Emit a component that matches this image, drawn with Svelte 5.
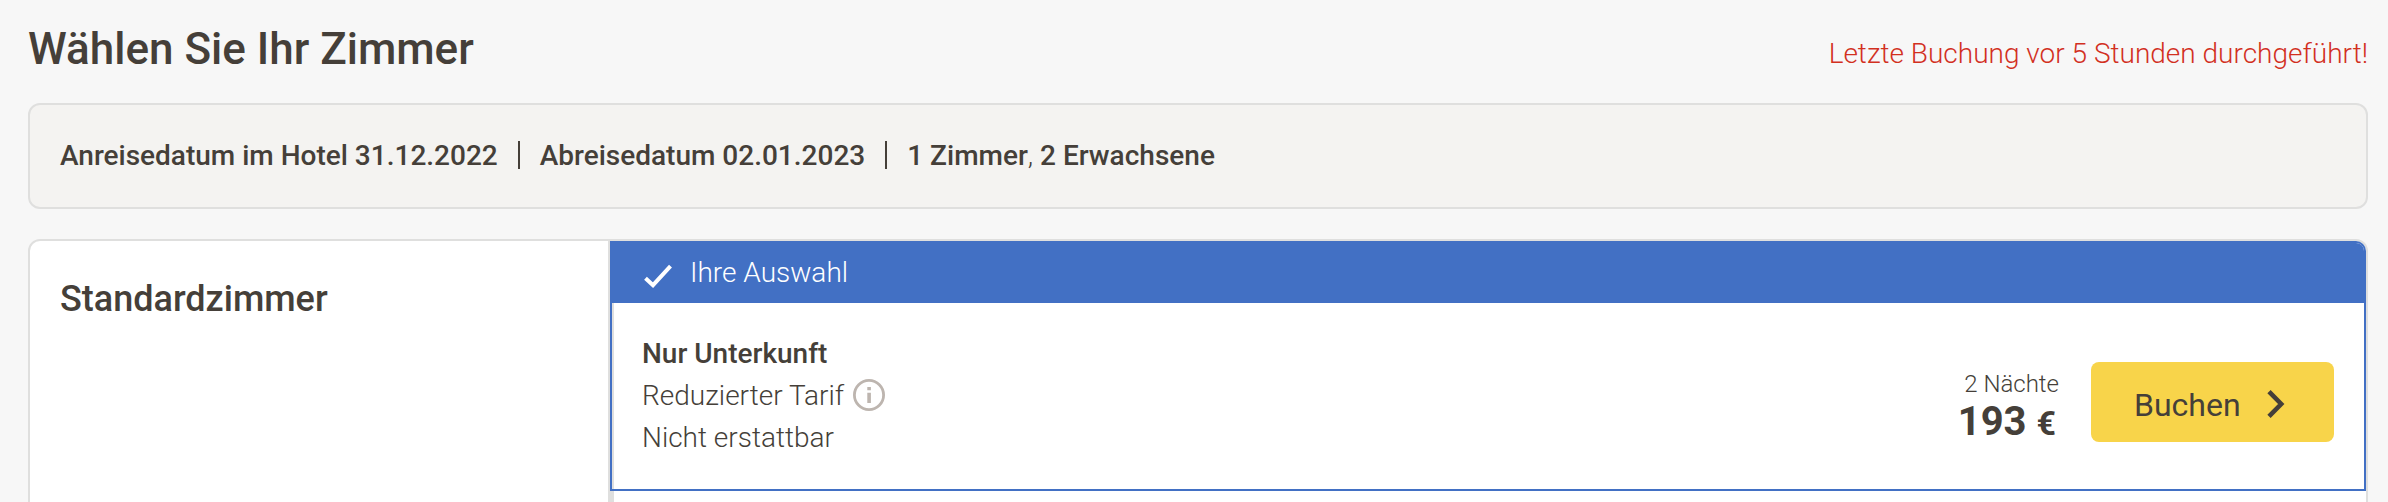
<script lang="ts">
  type Offer = {
    board: string;
    rate: string;
    terms: string;
    nights: number;
    price: number;
  };

  let {
    arrival = "31.12.2022",
    departure = "02.01.2023",
    rooms = 1,
    adults = 2,
    lastBooking = 5,
  } = $props();

  const roomName = "Standardzimmer";

  const offers: Offer[] = [
    {
      board: "Nur Unterkunft",
      rate: "Reduzierter Tarif",
      terms: "Nicht erstattbar",
      nights: 2,
      price: 193,
    },
  ];

  let selected = $state(0);
</script>

<main class="page">
  <header class="head">
    <h1>Wählen Sie Ihr Zimmer</h1>
    <p class="notice">Letzte Buchung vor {lastBooking} Stunden durchgeführt!</p>
  </header>

  <div class="summary">
    <strong class="arrival">Anreisedatum im Hotel {arrival}</strong>
    <span class="sep"></span>
    <strong class="departure">Abreisedatum {departure}</strong>
    <span class="sep"></span>
    <span class="guests"><strong>{rooms} Zimmer</strong>, <strong>{adults} Erwachsene</strong></span>
  </div>

  <section class="card">
    <div class="room">
      <h2>{roomName}</h2>
    </div>

    <div class="offers">
      {#each offers as offer, i (offer.board)}
        <article class="offer" class:selected={selected === i}>
          {#if selected === i}
            <div class="choice">
              <svg width="28" height="24" viewBox="0 0 28 24" fill="none">
                <path d="M1.5 14.2 9 21.2 26.5 2.2" stroke="#fff" stroke-width="4" />
              </svg>
              <span>Ihre Auswahl</span>
            </div>
          {/if}
          <div class="body">
            <div class="details">
              <div class="line board">{offer.board}</div>
              <div class="line">
                <span class="rate">{offer.rate}</span>
                <svg width="32" height="32" viewBox="0 0 32 32">
                  <circle cx="16" cy="16" r="14.6" fill="none" stroke="#bdb5af" stroke-width="2.8" />
                  <path d="M14.3 8h3.6v3.2h-3.6zM14.3 13.8h3.6V24h-3.6z" fill="#bdb5af" />
                </svg>
              </div>
              <div class="line">{offer.terms}</div>
            </div>
            <div class="price">
              <div class="nights">{offer.nights} Nächte</div>
              <div class="amount">{offer.price} <span class="currency">€</span></div>
            </div>
            <button class="book" onclick={() => (selected = i)}>
              <span>Buchen</span>
              <svg width="18" height="30" viewBox="0 0 18 30" fill="none">
                <path d="M2 2.6 14.2 15 2 27.4" stroke="#453f39" stroke-width="4.6" />
              </svg>
            </button>
          </div>
        </article>
      {/each}
    </div>
  </section>
</main>

<style>
  :global(body) {
    background: #f7f7f7;
    overflow: hidden;
  }

  .page {
    box-sizing: border-box;
    width: 2388px;
    height: 502px;
    padding: 0 20px 0 28px;
    overflow: hidden;
    font-family: Roboto, "Liberation Sans", sans-serif;
    font-size: 28px;
    font-weight: 300;
    color: #453f39;
    white-space: nowrap;
  }

  .head {
    display: flex;
    justify-content: space-between;
    height: 103px;
  }
  h1 {
    margin: 0;
    padding-top: 19px;
    font-size: 44px;
    font-weight: 500;
    line-height: 60px;
  }
  .notice {
    margin: 0;
    padding-top: 34px;
    line-height: 40px;
    color: #d2301f;
  }

  .summary {
    box-sizing: border-box;
    display: flex;
    align-items: center;
    height: 106px;
    padding: 0 30px 2px;
    border: 2px solid #dfdfde;
    border-radius: 12px;
    background: #f4f3f1;
  }
  .summary strong {
    font-weight: 500;
  }
  .sep {
    width: 2px;
    height: 28px;
    margin: 0 20px;
    background: #453f39;
  }

  .card {
    box-sizing: border-box;
    display: flex;
    height: 320px;
    margin-top: 30px;
    border: 2px solid #dfdfde;
    border-radius: 12px;
    background: #fff;
  }
  .room {
    box-sizing: border-box;
    width: 584px;
    padding: 33px 30px 0;
    border-right: 6px solid #dfdfde;
  }
  h2 {
    margin: 0;
    font-size: 36px;
    font-weight: 500;
    line-height: 50px;
  }

  .offers {
    flex: 1;
    margin-left: -4px;
  }
  .offer {
    box-sizing: border-box;
    height: 250px;
    border: 2px solid transparent;
    border-radius: 0 10px 0 0;
  }
  .offer.selected {
    border-color: #4270c4;
  }
  .choice {
    display: flex;
    align-items: center;
    gap: 18px;
    height: 60px;
    padding-left: 32px;
    border-radius: 0 8px 0 0;
    background: #4270c4;
    color: #fff;
  }
  .choice svg {
    margin-top: 6px;
  }
  .choice span {
    padding-bottom: 2px;
  }

  .body {
    display: flex;
    padding: 29px 30px 0;
  }
  .details {
    flex: 1;
  }
  .line {
    display: flex;
    align-items: center;
    gap: 9px;
    height: 42px;
  }
  .board {
    font-weight: 500;
  }
  .price {
    margin-right: 32px;
    padding-top: 36px;
    text-align: right;
  }
  .nights {
    font-size: 24px;
    line-height: 32px;
  }
  .amount {
    margin-right: 3px;
    font-size: 40px;
    font-weight: 700;
    line-height: 44px;
  }
  .currency {
    font-size: 34px;
  }

  .book {
    display: flex;
    align-items: center;
    gap: 26px;
    width: 243px;
    height: 80px;
    margin-top: 30px;
    padding: 0 0 0 43px;
    border: none;
    border-radius: 8px;
    background: #f8d44a;
    color: #453f39;
    font: 400 32px Roboto, "Liberation Sans", sans-serif;
    cursor: pointer;
  }
  .book span {
    padding-top: 6px;
  }
  .book svg {
    margin-top: 3px;
  }
</style>
